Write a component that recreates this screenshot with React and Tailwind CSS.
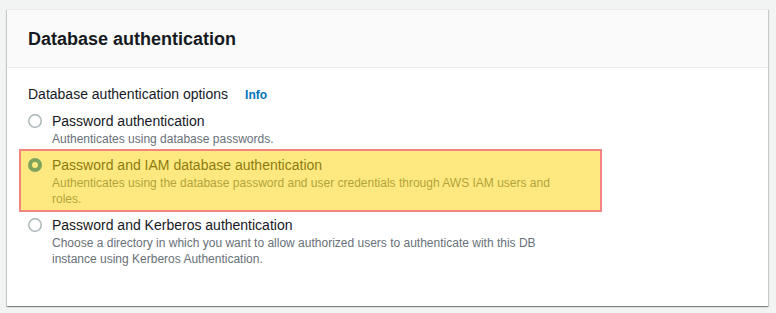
import React from "react";

function Radio({ checked }) {
  return (
    <svg width="14" height="14" viewBox="0 0 14 14" className="shrink-0 mt-[3px]">
      {checked ? (
        <circle cx="7" cy="7" r="5" fill="#ffffff" stroke="#0073bb" strokeWidth="4" />
      ) : (
        <circle cx="7" cy="7" r="6.25" fill="#ffffff" stroke="#aab7b8" strokeWidth="1.5" />
      )}
    </svg>
  );
}

function Option({ checked, label, children }) {
  return (
    <div className="flex items-start gap-[10px]">
      <Radio checked={checked} />
      <div className="flex flex-col">
        <div className="text-[14px] leading-[20px] text-[#16191f] whitespace-nowrap">{label}</div>
        <div className="text-[12px] leading-[16px] text-[#687078] whitespace-nowrap">{children}</div>
      </div>
    </div>
  );
}

export default function App() {
  return (
    <div
      className="min-h-[313px] w-[776px] bg-[#f2f3f3] pt-[9px] pl-[7px] pr-[8px] pb-[8px]"
      style={{ fontFamily: '"Liberation Sans", Arial, sans-serif' }}
    >
      <div className="bg-white border-t border-[#eaeded] shadow-[0_1px_1px_0_rgba(0,28,36,0.3),1px_1px_1px_0_rgba(0,28,36,0.15),-1px_1px_1px_0_rgba(0,28,36,0.15)]">
        <div className="bg-[#fafafa] border-b border-[#eaeded] h-[58px] flex items-center px-[21px]">
          <h2 className="text-[18px] leading-[22px] font-bold text-[#16191f]">Database authentication</h2>
        </div>
        <div className="px-[21px] pt-[16px] pb-[39px]">
          <div className="flex items-baseline text-[14px] leading-[20px] text-[#16191f]">
            <span>Database authentication options</span>
            <span className="ml-[17px] text-[12px] font-bold text-[#0073bb]">Info</span>
          </div>
          <div className="mt-[6px] flex flex-col gap-[8px]">
            <Option label="Password authentication">Authenticates using database passwords.</Option>
            <div className="relative">
              <Option checked label="Password and IAM database authentication">
                Authenticates using the database password and user credentials through AWS IAM users and
                <br />
                roles.
              </Option>
              <div className="absolute left-[-9px] top-[-6px] w-[583px] h-[63px] bg-[rgba(251,211,0,0.5)] border-2 border-[#f3857e] pointer-events-none" />
            </div>
            <Option label="Password and Kerberos authentication">
              Choose a directory in which you want to allow authorized users to authenticate with this DB
              <br />
              instance using Kerberos Authentication.
            </Option>
          </div>
        </div>
      </div>
    </div>
  );
}
